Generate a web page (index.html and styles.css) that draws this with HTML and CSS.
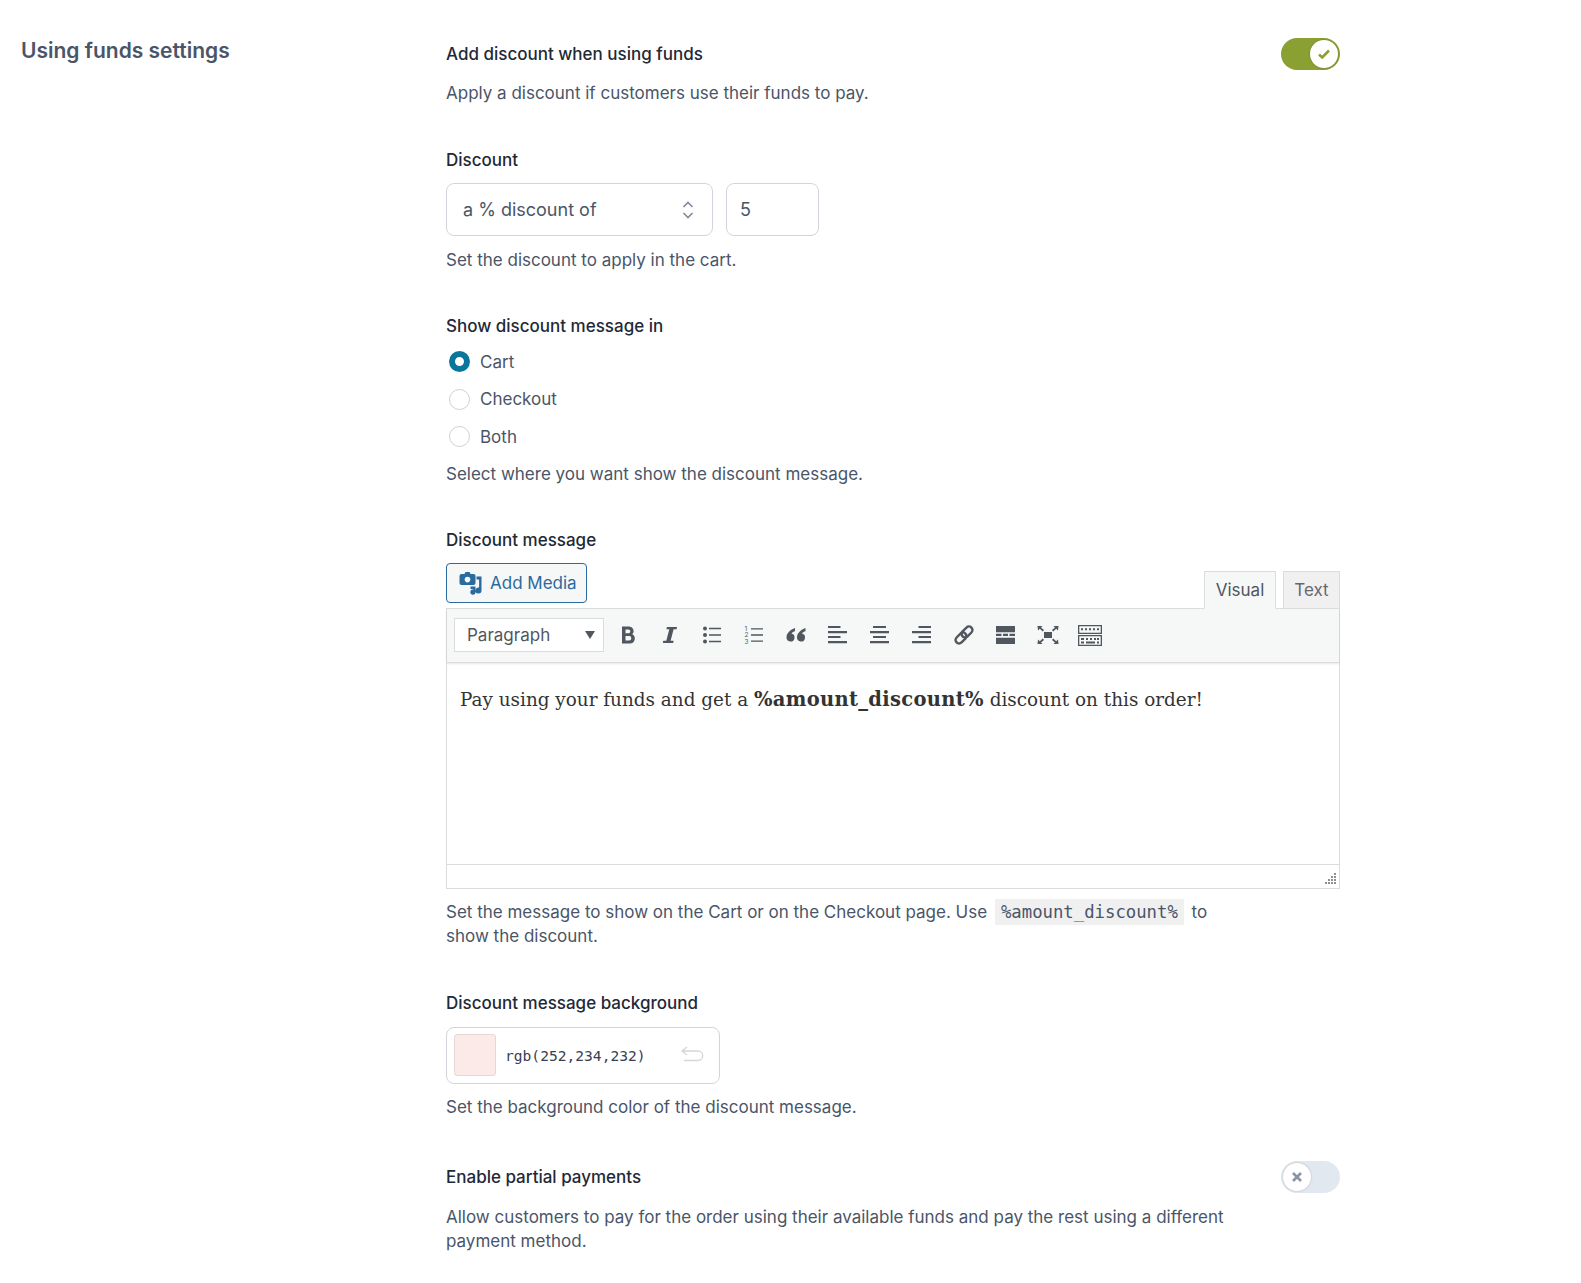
FILE: index.html
```html
<!DOCTYPE html>
<html lang="en">
<head>
  <meta charset="UTF-8" />
  <title>Using funds settings</title>
  <link rel="stylesheet" href="styles.css">
</head>
<body>
  <div class="settings">
    <h2 class="section-title">Using funds settings</h2>

    <div class="fields">

      <div class="field first">
        <div class="label-row">
          <span class="label">Add discount when using funds</span>
          <span class="toggle on">
            <span class="knob">
              <svg width="14" height="14" viewBox="0 0 14 14"><path d="M2 7.500l3.200 3L12 3.500" fill="none" stroke="#8ba032" stroke-width="2.600"/></svg>
            </span>
          </span>
        </div>
        <p class="desc">Apply a discount if customers use their funds to pay.</p>
      </div>

      <div class="field">
        <div class="label">Discount</div>
        <div class="discount-row">
          <div class="select-box">
            <span>a % discount of</span>
            <svg width="12" height="20" viewBox="0 0 12 20"><path d="M1.500 7L6 2.500 10.500 7M1.500 13L6 17.500 10.500 13" fill="none" stroke="#7f8a99" stroke-width="1.600"/></svg>
          </div>
          <div class="number-box">5</div>
        </div>
        <p class="desc after-row">Set the discount to apply in the cart.</p>
      </div>

      <div class="field">
        <div class="label">Show discount message in</div>
        <div class="radios">
          <div class="radio-row"><span class="radio checked"></span>Cart</div>
          <div class="radio-row"><span class="radio"></span>Checkout</div>
          <div class="radio-row"><span class="radio"></span>Both</div>
        </div>
        <p class="desc tight">Select where you want show the discount message.</p>
      </div>

      <div class="field message">
        <div class="label">Discount message</div>
        <div class="editor-top">
          <button class="add-media">
            <svg width="24" height="24" viewBox="0 0 24 24" fill="#2b6a9e">
              <path d="M3.500 3h3l1-2h4l1 2h3a2 2 0 0 1 2 2v7a2 2 0 0 1-2 2h-12a2 2 0 0 1-2-2V5a2 2 0 0 1 2-2zm6 2.800a2.800 2.800 0 1 0 0 5.600 2.800 2.800 0 0 0 0-5.600z" fill-rule="evenodd"/>
              <path d="M18.500 5.500H23.500v14a3 3 0 1 1-2.400-2.900V8.500h-2.600zM12.500 15.500H17.500v5.500a2.600 2.600 0 1 1-2.200-2.500V18h-2.800z"/>
            </svg>
            Add Media
          </button>
          <div class="tabs">
            <span class="tab active">Visual</span>
            <span class="tab">Text</span>
          </div>
        </div>
        <div class="editor">
          <div class="toolbar">
            <div class="format-select">Paragraph<span class="caret"></span></div>
            <span class="tool"><svg width="20" height="20" viewBox="0 0 20 20"><path fill-rule="evenodd" d="M4 1.500h7a4.500 4.500 0 0 1 3.300 7.700A5 5 0 0 1 11.500 18.500H4zm3.500 3v3.700h3a1.850 1.850 0 0 0 0-3.700zm0 6.500V15.500h3.600a2.200 2.200 0 0 0 0-4.500z"/></svg></span>
            <span class="tool"><svg width="20" height="20" viewBox="0 0 20 20"><path d="M7 2h10l-.4 2.300h-3l-3 11.400h3L13.200 18H2.800l.5-2.300h3l3-11.400h-3z"/></svg></span>
            <span class="tool"><svg width="20" height="20" viewBox="0 0 20 20"><circle cx="3" cy="3.500" r="2"/><circle cx="3" cy="10" r="2"/><circle cx="3" cy="16.500" r="2"/><path d="M7 2.700h12v1.600H7zM7 9.200h12v1.600H7zM7 15.700h12v1.600H7z"/></svg></span>
            <span class="tool"><svg width="20" height="20" viewBox="0 0 20 20"><path d="M7 3.200h12v1.400H7zM7 9.300h12v1.400H7zM7 15.400h12v1.400H7z"/><text x="0.500" y="6.200" class="ol-num">1</text><text x="0.500" y="12.400" class="ol-num">2</text><text x="0.500" y="18.800" class="ol-num">3</text></svg></span>
            <span class="tool"><svg width="20" height="20" viewBox="0 0 20 20"><path d="M9 3C4.500 4.500.500 8 .500 12.500a4 4 0 1 0 5-3.900C5.900 7.500 7.500 6.500 9 6.200zM19.500 3C15 4.500 11 8 11 12.500a4 4 0 1 0 5-3.900c.4-1.100 2-2.100 3.500-2.400z"/></svg></span>
            <span class="tool"><svg width="20" height="20" viewBox="0 0 20 20"><path d="M0 1h12.500v2H0zM0 6h19v2.200H0zM0 11h12.500v2H0zM0 16h19v2.200H0z"/></svg></span>
            <span class="tool"><svg width="20" height="20" viewBox="0 0 20 20"><path d="M3 1h13v2H3zM0 6h19v2.200H0zM3 11h13v2H3zM0 16h19v2.200H0z"/></svg></span>
            <span class="tool"><svg width="20" height="20" viewBox="0 0 20 20"><path d="M6.500 1H19v2H6.500zM0 6h19v2.200H0zM6.500 11H19v2H6.500zM0 16h19v2.200H0z"/></svg></span>
            <span class="tool"><svg width="24" height="24" viewBox="0 0 24 24"><g transform="rotate(-45 12 12)" fill="none" stroke="#50575e" stroke-width="2.400"><rect x="1.500" y="8.500" width="12.500" height="7" rx="3.500"/><rect x="10" y="8.500" width="12.500" height="7" rx="3.500"/></g></svg></span>
            <span class="tool"><svg width="20" height="20" viewBox="0 0 20 20"><path d="M0 1h19v6.200H0zM0 8.800h5.500v2.200H0zM7 8.800h5v2.200H7zM13.500 8.800H19v2.200h-5.500zM0 12.800h19V19H0z"/></svg></span>
            <span class="tool"><svg width="22" height="20" viewBox="0 0 22 20"><path d="M7 7h8v6H7zM.500 1h5L4 2.500l3 2.500-1.200 1.400L2.800 3.800 1 5.500zM21.500 1h-5L18 2.500 15 5l1.200 1.400 3-2.600L21 5.500zM.500 19h5L4 17.500l3-2.500-1.200-1.400-3 2.600L1 14.500zM21.500 19h-5l1.500-1.500-3-2.500 1.200-1.400 3 2.600 1.800-1.700z"/></svg></span>
            <span class="tool"><svg width="24" height="21" viewBox="0 0 24 21"><path fill-rule="evenodd" d="M0 0h24v9H0zm1.300 1.300v6.400h21.400V1.300zM0 10h24v11H0zm1.300 1.300v8.400h21.400v-8.400z"/><path d="M3 3.200h2v2H3zM7 3.200h2v2H7zM11 3.200h2v2h-2zM15 3.200h2v2h-2zM19 3.200h2v2h-2zM3 13h3v2H3zM8 13h2v2H8zM12 13h2v2h-2zM16 13h2v2h-2zM19 13h2v2h-2zM3 16.500h3v2H3zM8 16.500h9v2H8zM19 16.500h2v2h-2z"/></svg></span>
          </div>
          <div class="editor-body">Pay using your funds and get a <strong>%amount_discount%</strong> discount on this order!</div>
          <div class="status-bar">
            <svg width="13" height="13" viewBox="0 0 13 13" fill="#8c8f94"><path d="M10 1h2v2h-2zM10 4h2v2h-2zM7 4h2v2H7zM10 7h2v2h-2zM7 7h2v2H7zM4 7h2v2H4zM10 10h2v2h-2zM7 10h2v2H7zM4 10h2v2H4zM1 10h2v2H1z"/></svg>
          </div>
        </div>
        <p class="desc wide">Set the message to show on the Cart or on the Checkout page. Use <code>%amount_discount%</code> to<br>show the discount.</p>
      </div>

      <div class="field">
        <div class="label">Discount message background</div>
        <div class="color-box">
          <span class="swatch"></span>
          <span class="color-value">rgb(252,234,232)</span>
          <svg width="24" height="18" viewBox="0 0 24 18"><path d="M7 1L2 5l5 4M2 5h16a4.500 4.500 0 0 1 0 9.500H4" fill="none" stroke="#d3d6da" stroke-width="1.300"/></svg>
        </div>
        <p class="desc">Set the background color of the discount message.</p>
      </div>

      <div class="field">
        <div class="label-row">
          <span class="label">Enable partial payments</span>
          <span class="toggle">
            <span class="knob">
              <svg width="12" height="12" viewBox="0 0 12 12"><path d="M2 2l8 8M10 2l-8 8" fill="none" stroke="#8a93a8" stroke-width="2.600"/></svg>
            </span>
          </span>
        </div>
        <p class="desc wide last">Allow customers to pay for the order using their available funds and pay the rest using a different payment method.</p>
      </div>

    </div>
  </div>
</body>
</html>
```

FILE: styles.css
```css
* {
  box-sizing: border-box;
}

body {
  margin: 0;
  background: #fff;
  font-family: Inter, "Liberation Sans", sans-serif;
  font-size: 17px;
  color: #4a5568;
}

.settings {
  display: flex;
  padding: 38px 21px 0;
}

.section-title {
  width: 425px;
  flex: none;
  margin: 0;
  font-size: 21px;
  line-height: 26px;
  font-weight: 600;
  color: #4a5568;
}

.fields {
  width: 894px;
}

.field {
  margin-bottom: 42px;
}

.field.first,
.field.message {
  margin-bottom: 43px;
}

.label {
  display: block;
  font-weight: 500;
  line-height: 24px;
  color: #1f2937;
}

.label-row {
  display: flex;
  justify-content: space-between;
  align-items: center;
  height: 32px;
}

.desc {
  margin: 11px 0 0;
  line-height: 24px;
  color: #4a5568;
}

.desc.after-row {
  margin-top: 12px;
}

.desc.tight {
  margin-top: 6px;
}

.desc.wide {
  max-width: 790px;
}

.desc.last {
  margin-top: 12px;
}

.toggle {
  display: flex;
  align-items: center;
  width: 59px;
  height: 32px;
  padding: 2px;
  border-radius: 16px;
  background: #e2e8f0;
}

.toggle.on {
  justify-content: flex-end;
  background: #8ba032;
}

.knob {
  display: flex;
  align-items: center;
  justify-content: center;
  width: 28px;
  height: 28px;
  border-radius: 50%;
  background: #fff;
  box-shadow: 0 0 2px rgba(0, 0, 0, 0.25);
}

.discount-row {
  display: flex;
  gap: 13px;
  margin-top: 11px;
}

.select-box,
.number-box {
  display: flex;
  align-items: center;
  height: 53px;
  border: 1px solid #d1d5db;
  border-radius: 8px;
  font-size: 18px;
  color: #4a5568;
}

.select-box {
  justify-content: space-between;
  width: 267px;
  padding: 0 18px 0 16px;
}

.number-box {
  width: 93px;
  padding: 0 13px;
}

.radios {
  margin-top: 5px;
}

.radio-row {
  display: flex;
  align-items: center;
  gap: 10px;
  height: 37.500px;
  padding-left: 3px;
}

.radio {
  width: 21px;
  height: 21px;
  border: 1px solid #cdd0d4;
  border-radius: 50%;
}

.radio.checked {
  border: 6px solid #0a769b;
}

.editor-top {
  display: flex;
  justify-content: space-between;
  align-items: flex-end;
  margin-top: 11px;
}

.add-media {
  display: flex;
  align-items: center;
  gap: 8px;
  height: 40px;
  width: 141px;
  margin-bottom: 5px;
  padding: 0 0 0 11px;
  border: 1px solid #2b6a9e;
  border-radius: 4px;
  background: #f6f7f7;
  font: inherit;
  color: #2b6a9e;
}

.tabs {
  display: flex;
  gap: 7px;
}

.tab {
  display: flex;
  align-items: center;
  justify-content: center;
  height: 38px;
  width: 57px;
  margin-bottom: -1px;
  border: 1px solid #dcdcde;
  background: #f0f0f1;
  color: #646970;
}

.tab.active {
  position: relative;
  width: 72px;
  border-bottom-color: #f6f7f7;
  background: #f6f7f7;
  color: #50575e;
}

.editor {
  border: 1px solid #dcdcde;
}

.toolbar {
  display: flex;
  align-items: center;
  height: 54px;
  padding-left: 7px;
  background: #f6f7f7;
  border-bottom: 1px solid #dcdcde;
  box-shadow: 0 1px 2px rgba(0, 0, 0, 0.1);
}

.format-select {
  display: flex;
  align-items: center;
  justify-content: space-between;
  width: 150px;
  height: 34px;
  padding: 0 8px 0 12px;
  margin-right: 3px;
  border: 1px solid #dcdcde;
  background: #fff;
  color: #50575e;
}

.caret {
  width: 0;
  height: 0;
  border: 5px solid transparent;
  border-top: 8px solid #50575e;
  border-bottom: 0;
}

.tool {
  display: flex;
  align-items: center;
  justify-content: center;
  width: 42px;
  height: 34px;
  fill: #50575e;
}

.ol-num {
  font-size: 6.500px;
  font-family: Inter, sans-serif;
}

.editor-body {
  height: 201px;
  padding: 23px 13px;
  font-family: "DejaVu Serif", serif;
  font-size: 18.400px;
  line-height: 28px;
  color: #333;
}

.editor-body strong {
  font-size: 19.500px;
  letter-spacing: 0.300px;
}

.status-bar {
  display: flex;
  justify-content: flex-end;
  align-items: flex-end;
  height: 24px;
  padding: 0 2px 3px 0;
  border-top: 1px solid #dcdcde;
}

code {
  margin: 0 3px;
  padding: 3px 6px;
  background: #f0f0f1;
  font-family: "DejaVu Sans Mono", monospace;
  font-size: 17.300px;
  line-height: 24px;
  color: #4a5568;
}

.color-box {
  display: flex;
  align-items: center;
  width: 274px;
  height: 57px;
  margin-top: 12px;
  padding: 0 15px 0 7px;
  border: 1px solid #d1d5db;
  border-radius: 8px;
}

.swatch {
  width: 42px;
  height: 42px;
  border: 1px solid #e6d8d6;
  border-radius: 3px;
  background: rgb(252, 234, 232);
}

.color-value {
  flex: 1;
  margin-left: 9px;
  font-family: "DejaVu Sans Mono", monospace;
  font-size: 14.600px;
  color: #374151;
}
```
